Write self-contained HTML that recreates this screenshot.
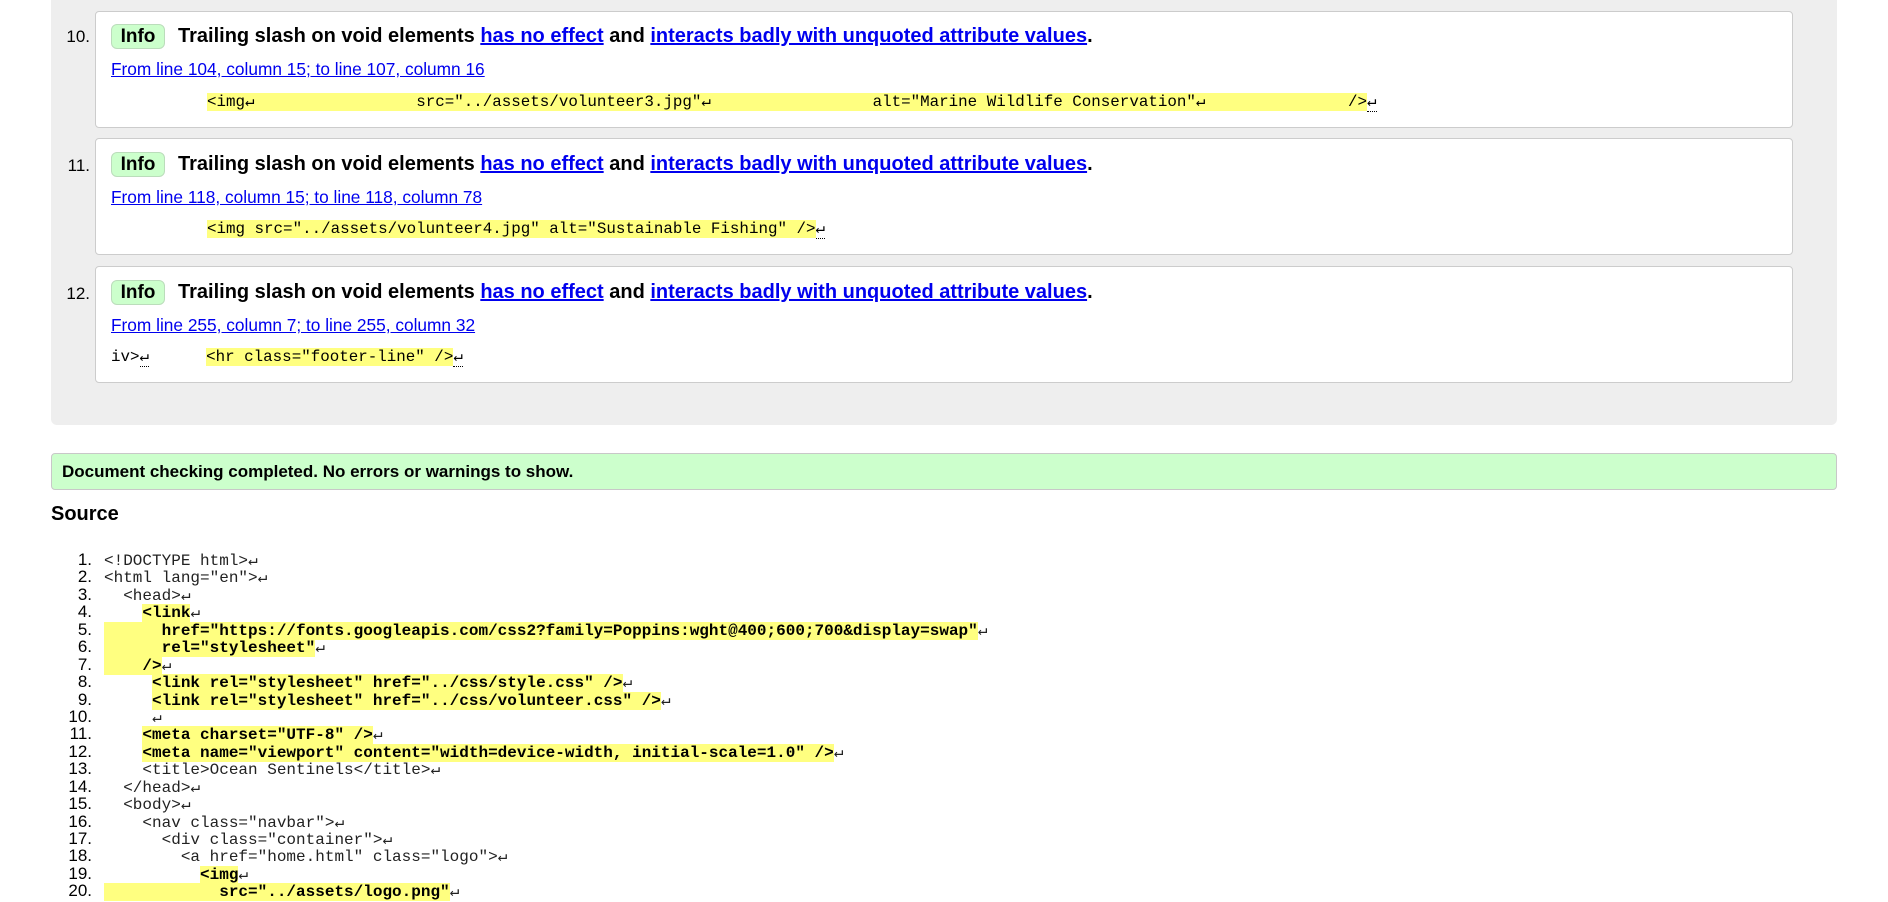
<!DOCTYPE html>
<html><head><meta charset="utf-8"><style>
body{margin:0;width:1888px;height:888px;overflow:hidden;background:#fff;font-family:"Liberation Sans",Arial,sans-serif;color:#000;position:relative}
.panel{position:absolute;left:51px;top:-10px;width:1786px;height:435px;background:#eee;border-radius:6px}
.box{position:absolute;left:95px;width:1696px;height:115px;background:#fff;border:1px solid #ccc;border-radius:4px}
.num{position:absolute;left:40px;width:50px;text-align:right;font-size:17px}
.badge{position:absolute;left:111px;width:52px;height:23px;background:#ccffcc;border:1px solid #bbddbb;border-radius:6px;font-weight:bold;font-size:19px;text-align:center;line-height:23px}
.title{position:absolute;left:178px;font-weight:bold;font-size:20px;white-space:nowrap}
.title a,.loc{color:#00e;text-decoration:underline}
.loc{position:absolute;left:111px;font-size:17.3px;white-space:nowrap}
.code{position:absolute;font-family:"Liberation Mono","DejaVu Sans Mono",monospace;font-size:15.85px;white-space:pre;line-height:18px}
.hl{background:#ffff80}
.rt{border-bottom:1px dotted #000}
.ok{position:absolute;left:51px;top:453px;width:1784px;height:35px;background:#ccffcc;border:1px solid #c8c8c8;border-radius:4px;font-weight:bold;font-size:17px;line-height:35px;text-indent:10px}
h2{position:absolute;left:51px;top:503px;margin:0;font-size:20px}
.src{position:absolute;left:0;top:551px;font-family:"Liberation Mono","DejaVu Sans Mono",monospace;font-size:16px;color:#222}
.src div{height:17.45px;line-height:17.45px;white-space:pre;overflow:visible}
.src .n{display:inline-block;width:104px;text-align:right;font-family:"Liberation Sans",Arial,sans-serif;font-size:17px;line-height:17.45px;color:#000;padding-right:12px;box-sizing:border-box;vertical-align:baseline}
.src b{font-weight:bold;background:#ffff80;color:#000}
</style></head><body>
<div class="panel"></div>

<div class="box" style="top:11px"></div>
<div class="num" style="top:27px">10.</div>
<div class="badge" style="top:24px">Info</div>
<div class="title" style="top:25px">Trailing slash on void elements <a>has no effect</a> and <a>interacts badly with unquoted attribute values</a>.</div>
<div class="loc" style="top:59px">From line 104, column 15; to line 107, column 16</div>
<div class="code" style="left:207px;top:93px"><span class="hl">&lt;img↵                 src="../assets/volunteer3.jpg"↵                 alt="Marine Wildlife Conservation"↵               /&gt;</span><span class="rt">↵</span></div>

<div class="box" style="top:138px"></div>
<div class="num" style="top:156px">11.</div>
<div class="badge" style="top:152px">Info</div>
<div class="title" style="top:153px">Trailing slash on void elements <a>has no effect</a> and <a>interacts badly with unquoted attribute values</a>.</div>
<div class="loc" style="top:187px">From line 118, column 15; to line 118, column 78</div>
<div class="code" style="left:207px;top:220px"><span class="hl">&lt;img src="../assets/volunteer4.jpg" alt="Sustainable Fishing" /&gt;</span><span class="rt">↵</span></div>

<div class="box" style="top:266px"></div>
<div class="num" style="top:284px">12.</div>
<div class="badge" style="top:280px">Info</div>
<div class="title" style="top:281px">Trailing slash on void elements <a>has no effect</a> and <a>interacts badly with unquoted attribute values</a>.</div>
<div class="loc" style="top:315px">From line 255, column 7; to line 255, column 32</div>
<div class="code" style="left:111px;top:348px">iv&gt;<span class="rt">↵</span>      <span class="hl">&lt;hr class="footer-line" /&gt;</span><span class="rt">↵</span></div>

<div class="ok">Document checking completed. No errors or warnings to show.</div>
<h2>Source</h2>

<div class="src">
<div><span class="n">1.</span>&lt;!DOCTYPE html&gt;↵</div>
<div><span class="n">2.</span>&lt;html lang="en"&gt;↵</div>
<div><span class="n">3.</span>  &lt;head&gt;↵</div>
<div><span class="n">4.</span>    <b>&lt;link</b>↵</div>
<div><span class="n">5.</span><b>      href="https://fonts.googleapis.com/css2?family=Poppins:wght@400;600;700&amp;display=swap"</b>↵</div>
<div><span class="n">6.</span><b>      rel="stylesheet"</b>↵</div>
<div><span class="n">7.</span><b>    /&gt;</b>↵</div>
<div><span class="n">8.</span>     <b>&lt;link rel="stylesheet" href="../css/style.css" /&gt;</b>↵</div>
<div><span class="n">9.</span>     <b>&lt;link rel="stylesheet" href="../css/volunteer.css" /&gt;</b>↵</div>
<div><span class="n">10.</span>     ↵</div>
<div><span class="n">11.</span>    <b>&lt;meta charset="UTF-8" /&gt;</b>↵</div>
<div><span class="n">12.</span>    <b>&lt;meta name="viewport" content="width=device-width, initial-scale=1.0" /&gt;</b>↵</div>
<div><span class="n">13.</span>    &lt;title&gt;Ocean Sentinels&lt;/title&gt;↵</div>
<div><span class="n">14.</span>  &lt;/head&gt;↵</div>
<div><span class="n">15.</span>  &lt;body&gt;↵</div>
<div><span class="n">16.</span>    &lt;nav class="navbar"&gt;↵</div>
<div><span class="n">17.</span>      &lt;div class="container"&gt;↵</div>
<div><span class="n">18.</span>        &lt;a href="home.html" class="logo"&gt;↵</div>
<div><span class="n">19.</span>          <b>&lt;img</b>↵</div>
<div><span class="n">20.</span><b>            src="../assets/logo.png"</b>↵</div>
</div>
</body></html>
